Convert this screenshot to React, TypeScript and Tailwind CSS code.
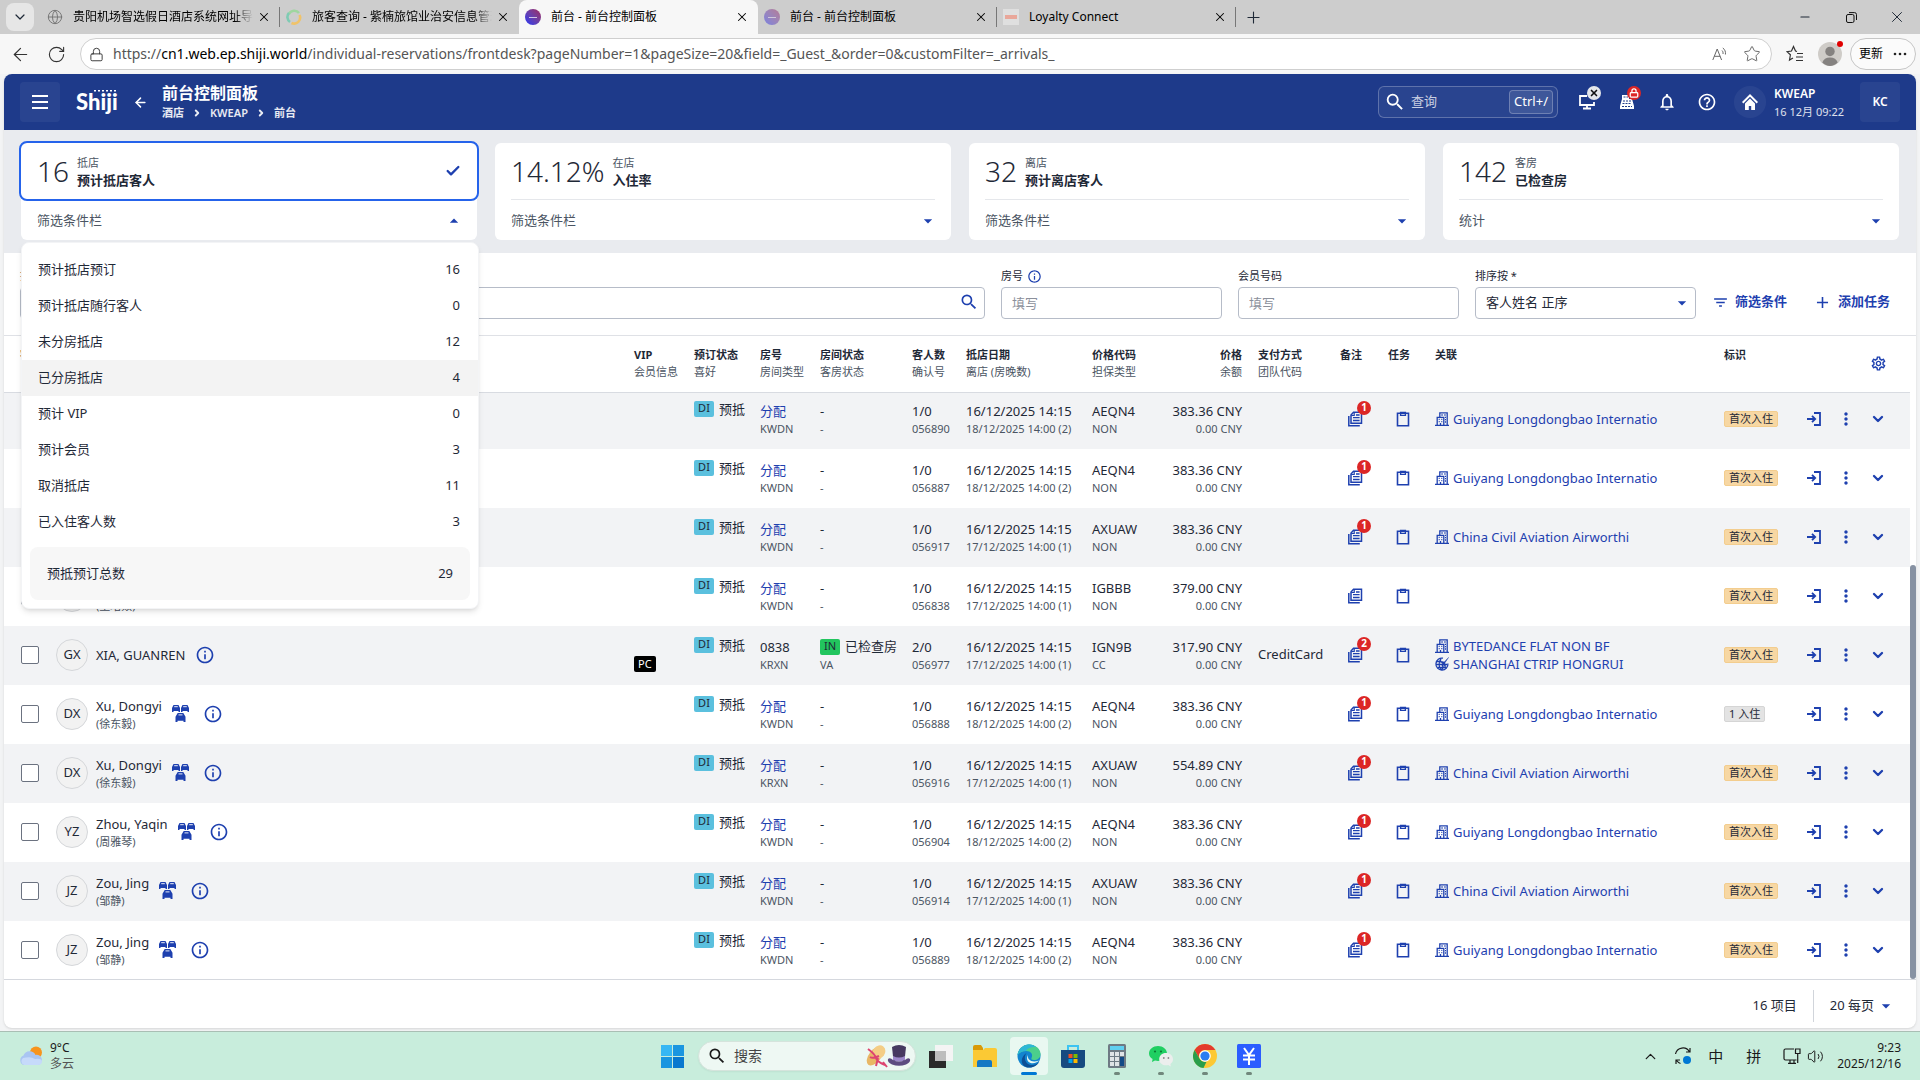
import React from 'react'
import {
  MdAdd,
  MdArrowDropDown,
  MdArrowDropUp,
  MdFilterList,
  MdHelpOutline,
  MdInfoOutline,
  MdMoreVert,
  MdNotificationsNone,
  MdOutlineSettings,
  MdSearch,
} from 'react-icons/md'
import { ArrowLeft, Check, ChevronDown, ChevronUp, Globe, Lock, Minus, Plus, RotateCw, Star, Volume2, X } from 'lucide-react'

type Guest = {
  initials: string
  name?: string
  local?: string
  cars?: boolean
  info?: boolean
  member?: string
  room?: string
  type: string
  state?: string
  pax: string
  conf: string
  out: string
  rate: string
  guarantee: string
  price: string
  pay?: string
  notes?: number
  links: string[]
  flag: string
}

const guests: Guest[] = [
  { initials: '', type: 'KWDN', pax: '1/0', conf: '056890', out: '18/12/2025 14:00 (2)', rate: 'AEQN4', guarantee: 'NON', price: '383.36', notes: 1, links: ['Guiyang Longdongbao Internatio'], flag: '首次入住' },
  { initials: '', type: 'KWDN', pax: '1/0', conf: '056887', out: '18/12/2025 14:00 (2)', rate: 'AEQN4', guarantee: 'NON', price: '383.36', notes: 1, links: ['Guiyang Longdongbao Internatio'], flag: '首次入住' },
  { initials: '', type: 'KWDN', pax: '1/0', conf: '056917', out: '17/12/2025 14:00 (1)', rate: 'AXUAW', guarantee: 'NON', price: '383.36', notes: 1, links: ['China Civil Aviation Airworthi'], flag: '首次入住' },
  { initials: '', name: ' ', local: '王培焱', type: 'KWDN', pax: '1/0', conf: '056838', out: '17/12/2025 14:00 (1)', rate: 'IGBBB', guarantee: 'NON', price: '379.00', links: [], flag: '首次入住' },
  { initials: 'GX', name: 'XIA, GUANREN', info: true, member: 'PC', room: '0838', type: 'KRXN', state: 'VA', pax: '2/0', conf: '056977', out: '17/12/2025 14:00 (1)', rate: 'IGN9B', guarantee: 'CC', price: '317.90', pay: 'CreditCard', notes: 2, links: ['BYTEDANCE FLAT NON BF', 'SHANGHAI CTRIP HONGRUI'], flag: '首次入住' },
  { initials: 'DX', name: 'Xu, Dongyi', local: '徐东毅', cars: true, info: true, type: 'KWDN', pax: '1/0', conf: '056888', out: '18/12/2025 14:00 (2)', rate: 'AEQN4', guarantee: 'NON', price: '383.36', notes: 1, links: ['Guiyang Longdongbao Internatio'], flag: '1 入住' },
  { initials: 'DX', name: 'Xu, Dongyi', local: '徐东毅', cars: true, info: true, type: 'KRXN', pax: '1/0', conf: '056916', out: '17/12/2025 14:00 (1)', rate: 'AXUAW', guarantee: 'NON', price: '554.89', notes: 1, links: ['China Civil Aviation Airworthi'], flag: '首次入住' },
  { initials: 'YZ', name: 'Zhou, Yaqin', local: '周雅琴', cars: true, info: true, type: 'KWDN', pax: '1/0', conf: '056904', out: '18/12/2025 14:00 (2)', rate: 'AEQN4', guarantee: 'NON', price: '383.36', notes: 1, links: ['Guiyang Longdongbao Internatio'], flag: '首次入住' },
  { initials: 'JZ', name: 'Zou, Jing', local: '邹静', cars: true, info: true, type: 'KWDN', pax: '1/0', conf: '056914', out: '17/12/2025 14:00 (1)', rate: 'AXUAW', guarantee: 'NON', price: '383.36', notes: 1, links: ['China Civil Aviation Airworthi'], flag: '首次入住' },
  { initials: 'JZ', name: 'Zou, Jing', local: '邹静', cars: true, info: true, type: 'KWDN', pax: '1/0', conf: '056889', out: '18/12/2025 14:00 (2)', rate: 'AEQN4', guarantee: 'NON', price: '383.36', notes: 1, links: ['Guiyang Longdongbao Internatio'], flag: '首次入住' },
]

const menu = [
  ['预计抵店预订', '16'],
  ['预计抵店随行客人', '0'],
  ['未分房抵店', '12'],
  ['已分房抵店', '4'],
  ['预计 VIP', '0'],
  ['预计会员', '3'],
  ['取消抵店', '11'],
  ['已入住客人数', '3'],
]

const cards = [
  { value: '16', small: '抵店', title: '预计抵店客人', more: '筛选条件栏' },
  { value: '14.12%', small: '在店', title: '入住率', more: '筛选条件栏' },
  { value: '32', small: '离店', title: '预计离店客人', more: '筛选条件栏' },
  { value: '142', small: '客房', title: '已检查房', more: '统计' },
]

const columns = [
  { a: 'VIP', b: '会员信息' },
  { a: '预订状态', b: '喜好' },
  { a: '房号', b: '房间类型' },
  { a: '房间状态', b: '客房状态' },
  { a: '客人数', b: '确认号' },
  { a: '抵店日期', b: '离店 (房晚数)' },
  { a: '价格代码', b: '担保类型' },
  { a: '价格', b: '余额', right: true },
  { a: '支付方式', b: '团队代码' },
  { a: '备注' },
  { a: '任务' },
  { a: '关联' },
  { a: '标识' },
]

/* ---------- icons ---------- */

function NoteIcon() {
  return (
    <svg viewBox="0 0 16 16" className="h-4 w-4" fill="none" stroke="currentColor" strokeWidth="1.5">
      <path d="M1.800 5v9.700h11" />
      <path d="M6.500 1.300h8v11H4V4z" />
      <path d="M7.200 1.500v3H4.200" strokeWidth="1.200" />
      <path d="M6 6.700h6.600M6 9.500h6.600M9 4h3.600" strokeWidth="1.300" />
    </svg>
  )
}

function ClipboardIcon() {
  return (
    <svg viewBox="0 0 14 16" className="h-4 w-[14px]" fill="none" stroke="currentColor" strokeWidth="1.6">
      <path d="M1.500 2.300h11v12.400h-11z" />
      <path d="M4.600 1.400h4.800v3H4.600z" strokeWidth="1.400" />
    </svg>
  )
}

function BuildingIcon() {
  return (
    <svg viewBox="0 0 14 14" className="h-[14px] w-[14px] shrink-0" fill="none" stroke="currentColor" strokeWidth="1.3">
      <path d="M0 13.300h14M2.200 13.400V5.300h6.600v8M4.800 5V.8h7.400v12.600" />
      <path d="M6.400 3h1.300M9.300 3h1.300M10 5.300h1M10 7.600h1M10 10h1M3.700 7.400h1M6.300 7.400h1M3.700 9.600h1M6.300 9.600h1M5.500 11v2" />
    </svg>
  )
}

function AgentIcon() {
  return (
    <svg viewBox="0 0 14 14" className="h-[14px] w-[14px] shrink-0" fill="none" stroke="currentColor" strokeWidth="1.3">
      <path d="M8 1.200A6 6 0 1 0 12.900 6.500" />
      <path d="M1 7.500h11M6 2c-2.400 3-2.400 7.600 0 11M7.500 8c1 2 0 4-1 5M2 4.500h4M2.500 10.500h9" />
      <path d="M13.600.4 9.200 5 5.800 4l-.8.8 2.600 1.600-1.400 1.400 1 .8 1.300-1 1.500 2.500.8-.8-1-3.200z" fill="currentColor" strokeWidth=".4" />
    </svg>
  )
}

function EnterIcon() {
  return (
    <svg viewBox="0 0 14 14" className="h-[14px] w-[14px]" fill="none" stroke="currentColor" strokeWidth="1.8">
      <path d="M7 1h6v12H7M0 7h8" />
      <path d="M5 3.800 8.200 7 5 10.200" />
    </svg>
  )
}

function CarsIcon() {
  const car = 'M1.500 0h5L8 3v4H6.500V6h-5v1H0V3z'
  return (
    <svg viewBox="0 0 17 17" className="h-[17px] w-[17px]" fill="currentColor">
      <path d={car} />
      <path d={car} transform="translate(9 0)" />
      <path d="M5.700 8h5.600l2.200 3.800V17h-2v-1.300h-6V17h-2v-5.200z" />
      <path d="M2.200 1.700h3.600M11.200 1.700h3.600M6.500 9.900h4" stroke="#fff" strokeWidth=".9" />
    </svg>
  )
}

function Favicon({ kind }: { kind: string }) {
  if (kind === 'globe') return <Globe size={16} strokeWidth={1.500} className="text-[#777]" />
  if (kind === 'swirl') {
    return (
      <svg viewBox="0 0 16 16" className="h-4 w-4" fill="none" strokeWidth="2.600">
        <path d="M13 4a6 6 0 0 0-10 1" stroke="#9fd6a0" />
        <path d="M3 4a6 6 0 0 0 1 9" stroke="#7fcbb4" />
        <path d="M13.500 6a6 6 0 0 1-8 8" stroke="#f0c36a" />
      </svg>
    )
  }
  if (kind === 'loyalty') {
    return <span className="flex h-4 w-4 items-center justify-center bg-[#dfdfdf]"><span className="h-1 w-3 bg-[#e9a79a]" /></span>
  }
  return (
    <span className={`flex h-4 w-4 items-center justify-center rounded-full bg-linear-to-tr from-[#1f2df5] to-[#a01d5e] ${kind === 'dim' ? 'opacity-50' : ''}`}>
      <span className="h-px w-2 bg-white/70" />
    </span>
  )
}

/* ---------- browser ---------- */

function Tab({ title, kind, active, line, fade }: { title: string; kind: string; active?: boolean; line?: boolean; fade?: boolean }) {
  return (
    <div className={`flex h-full w-[239px] items-center pl-1.5 ${active ? 'rounded-t-lg bg-[#f7f7f7]' : ''}`}>
      <Favicon kind={kind} />
      <div className={`ml-2.5 w-[180px] overflow-hidden whitespace-nowrap text-black ${fade ? 'mask-r-from-90%' : ''}`}>{title}</div>
      <button aria-label="关闭标签页" className="ml-1 text-black"><X size={14} strokeWidth={1.800} /></button>
      <span className={`ml-auto h-5 w-px ${line ? 'bg-[#777]' : ''}`} />
    </div>
  )
}

function Browser() {
  return (
    <div className="text-xs">
      <div className="flex h-[34px] items-center bg-[#cdcdcd]">
        <button aria-label="标签页搜索" className="ml-1.5 mr-[7px] flex h-7 w-7 items-center justify-center rounded-lg bg-[#e6e6e6]">
          <ChevronDown size={16} strokeWidth={1.800} />
        </button>
        <Tab kind="globe" title="贵阳机场智选假日酒店系统网址导航" line fade />
        <Tab kind="swirl" title="旅客查询 - 紫楠旅馆业治安信息管理系" fade />
        <Tab kind="shiji" title="前台 - 前台控制面板" active />
        <Tab kind="dim" title="前台 - 前台控制面板" line />
        <Tab kind="loyalty" title="Loyalty Connect" line />
        <button aria-label="新建标签页" className="ml-2"><Plus size={19} strokeWidth={1.400} /></button>
        <div className="ml-auto flex items-center">
          <button aria-label="最小化" className="flex w-[46px] justify-center"><Minus size={14} strokeWidth={1.800} /></button>
          <button aria-label="还原" className="flex w-[46px] justify-center">
            <svg viewBox="0 0 11 11" className="h-[11px] w-[11px]" fill="none" stroke="#111">
              <rect x=".5" y="2.500" width="7.500" height="8" rx="1.500" />
              <path d="M3 .6h5.500a2 2 0 0 1 2 2v5.400" />
            </svg>
          </button>
          <button aria-label="关闭" className="flex w-[46px] justify-center"><X size={18} strokeWidth={1.300} /></button>
        </div>
      </div>
      <div className="flex h-10 items-center bg-[#f7f7f7] pl-2.5 pr-1">
        <button aria-label="后退" className="text-[#333]"><ArrowLeft size={21} strokeWidth={1.400} /></button>
        <button aria-label="刷新" className="ml-4 text-[#333]"><RotateCw size={19} strokeWidth={1.400} /></button>
        <div className="ml-3.5 flex h-8 flex-1 items-center rounded-full border border-[#cfcfcf] bg-white pl-2 pr-2.5">
          <Lock size={15} strokeWidth={1.500} className="text-[#333]" />
          <div className="ml-[9px] flex-1 text-sm text-[#555]">
            https://<span className="text-black">cn1.web.ep.shiji.world</span>/individual-reservations/frontdesk?pageNumber=1&amp;pageSize=20&amp;field=_Guest_&amp;order=0&amp;customFilter=_arrivals_
          </div>
          <svg viewBox="0 0 16 16" className="h-4 w-4" fill="none" stroke="#666">
            <path d="m.8 14 4.400-11 4.400 11M2.300 10.300h5.800M10 4.500c1 1 1.200 2.200 1 3.500M10.800 2c2.200 1.600 3 3.800 2.600 6.500" />
          </svg>
          <Star size={18} strokeWidth={1.300} className="ml-[15px] text-[#666]" />
        </div>
        <svg viewBox="0 0 18 18" className="ml-3.5 h-[18px] w-[18px]" fill="none" stroke="#333" strokeWidth="1.200">
          <path d="M11 6.500 9.500 6 7.500 1.500 5.500 6 1 6.600l3.400 3.200-.9 5.200 3.500-2M11 8.500h6M10 12h7M10 15.500h7" />
        </svg>
        <button aria-label="个人资料" className="relative ml-3.5 h-6 w-6 rounded-full bg-[#cfccc8]">
          <svg viewBox="0 0 28 28" className="h-6 w-6" fill="#858280"><circle cx="14" cy="11" r="5.500" /><path d="M5 24q2-6 9-6t9 6q-4 4-9 4t-9-4" /></svg>
          <span className="absolute -top-px -right-px h-1.5 w-1.5 rounded-full bg-[#e00000]" />
        </button>
        <button className="ml-2 flex h-8 items-center gap-2.5 rounded-full border border-[#c6c6c6] bg-[#fbfbfb] px-2 text-black">
          更新
          <svg viewBox="0 0 14 4" className="h-1 w-3.5" fill="#222"><circle cx="2" cy="2" r="1.300" /><circle cx="7" cy="2" r="1.300" /><circle cx="12" cy="2" r="1.300" /></svg>
        </button>
      </div>
    </div>
  )
}

/* ---------- app header ---------- */

function Header() {
  return (
    <header className="flex h-14 shrink-0 items-center bg-[#1e3a8a] px-4 text-white">
      <button aria-label="菜单" className="flex h-10 w-10 items-center justify-center rounded bg-white/5">
        <svg viewBox="0 0 16 14" className="h-3.5 w-4" stroke="#fff" strokeWidth="2"><path d="M0 1h16M0 7h16M0 13h16" /></svg>
      </button>
      <a href="#" className="relative ml-4 w-11 font-[Lato] text-[22px] leading-6 font-black">
        Shiji
        <svg viewBox="0 0 24 2" className="absolute right-0.5 top-0 h-0.5 w-6" fill="#fff"><path d="M0 0h2v1.500H0zM4 0h2v1.500H4zM8 0h2v1.500H8zM12 0h2v1.500h-2zM16 0h2v1.500h-2zM20 0h2v1.500h-2z" /></svg>
      </a>
      <button aria-label="返回" className="ml-[13px]"><ArrowLeft size={15} strokeWidth={2.400} /></button>
      <div className="ml-3.5 pt-0.5">
        <h1 className="text-base leading-5 font-bold">前台控制面板</h1>
        <nav className="flex items-center gap-2 text-[11px] leading-5 font-semibold text-white/90">
          <a href="#">酒店</a>
          <ChevronDown size={10} strokeWidth={4.500} className="-rotate-90" />
          <a href="#">KWEAP</a>
          <ChevronDown size={10} strokeWidth={4.500} className="-rotate-90" />
          <a href="#">前台</a>
        </nav>
      </div>
      <label className="ml-auto flex h-8 w-[180px] items-center rounded-md border border-white/25 bg-white/5 pl-[5px] pr-1 text-[13px]">
        <MdSearch size={22} />
        <input aria-label="查询" placeholder="查询" className="ml-[5px] w-0 flex-1 placeholder:text-white/75" />
        <kbd className="flex h-6 items-center rounded border border-white/25 bg-white/10 px-1 font-[inherit]">Ctrl+/</kbd>
      </label>
      <div className="ml-[19px] flex items-center gap-5">
        <button aria-label="设备" className="relative">
          <svg viewBox="0 0 20 20" className="h-5 w-5" fill="none" stroke="#fff" strokeWidth="1.8"><path d="M10 4H3v9h14v-3M6 16.500h8M10 13v3" /></svg>
          <span className="absolute -top-1.5 left-2.5 flex h-3.5 w-3.5 items-center justify-center rounded-full bg-[#e5e7eb] text-[#111]"><X size={10} strokeWidth={4} /></span>
        </button>
        <button aria-label="收银" className="relative">
          <svg viewBox="0 0 20 20" className="h-5 w-5" fill="#fff">
            <path d="M5 3h7v4h3l2 7v3H3v-3l2-7z" />
            <path d="M6.500 5H11M6 9h8M5.500 11.500h9M5 14.500h10" stroke="#1e3a8a" strokeDasharray="2 1" />
          </svg>
          <span className="absolute -top-1.5 left-2.5 flex h-3.5 w-3.5 items-center justify-center rounded-full bg-[#dc2626]"><Lock size={10} strokeWidth={3} /></span>
        </button>
        <button aria-label="通知"><MdNotificationsNone size={20} /></button>
        <button aria-label="帮助"><MdHelpOutline size={20} /></button>
      </div>
      <span className="ml-[17px] flex h-8 w-8 items-center justify-center rounded-full bg-white/5">
        <svg viewBox="0 0 18 18" className="h-[18px] w-[18px]" fill="#fff"><path d="M9 1 1 9l1.400 1.400L9 3.800l6.600 6.600L17 9z" /><path d="M9 5.500 4 10.500V17h3.800v-4h2.400v4H14v-6.500z" /></svg>
      </span>
      <div className="ml-2 w-[70px] pt-0.5 whitespace-nowrap">
        <div className="text-xs leading-[18px] font-semibold">KWEAP</div>
        <div className="text-[11px] leading-[18px] text-white/85">16 12月 09:22</div>
      </div>
      <button className="ml-4 h-10 w-10 rounded bg-white/5 text-xs font-semibold">KC</button>
    </header>
  )
}

function Cards() {
  return (
    <section className="grid shrink-0 grid-cols-4 gap-[18px] bg-[#e9ebef] px-[17px] py-[13px]">
      {cards.map((c, i) => {
        const on = i === 0
        return (
          <div key={c.title} className="relative rounded-md bg-white">
            <div className={`flex items-center ${on ? '-mx-0.5 -mt-0.5 h-[60px] rounded-lg border-2 border-[#2563eb] px-4' : 'mx-4 h-[57px] border-b border-[#e5e7eb]'}`}>
              <span className="text-[28px] leading-8 font-light">{c.value}</span>
              <div className="ml-2 mt-0.5">
                <div className="text-[11px] leading-4 text-[#4b5563]">{c.small}</div>
                <div className="text-[13px] leading-[18px] font-bold">{c.title}</div>
              </div>
              {on && <Check size={16} strokeWidth={3.500} className="ml-auto text-[#1e40af]" />}
            </div>
            <button className={`flex w-full items-center justify-between pr-[13px] pl-4 text-[13px] text-[#4b5563] ${on ? 'h-[39px] pt-px' : 'h-10 pt-0.5'}`}>
              {c.more}
              {on ? <MdArrowDropUp size={20} className="text-[#1e40af]" /> : <MdArrowDropDown size={20} className="text-[#1e40af]" />}
            </button>
            {on && <Menu />}
          </div>
        )
      })}
    </section>
  )
}

function Menu() {
  return (
    <div className="absolute left-0 -right-0.5 top-full z-30 mt-0.5 rounded-lg border border-[#f3f4f6] bg-white pt-[9px] pb-2 text-[13px] text-[#1f2937] shadow-md">
      {menu.map(([label, n]) => (
        <button key={label} className={`flex h-9 w-full items-center justify-between pr-[18px] pl-4 ${n === '4' ? 'bg-[#f3f3f3]' : ''}`}>
          <span>{label}</span>
          <span>{n}</span>
        </button>
      ))}
      <div className="mx-2 mt-[7px] flex h-[53px] items-center justify-between rounded-lg bg-[#f7f7f7] px-[17px]">
        <span>预抵预订总数</span>
        <span>29</span>
      </div>
    </div>
  )
}

function Filters() {
  const box = 'h-8 w-full rounded border border-[#b6bcc8] bg-white px-2.5 text-[13px] placeholder:text-[#8b909b]'
  return (
    <section className="flex shrink-0 items-end gap-4 border-b border-[#dfe1e6] px-4 pt-[13px] pb-4 text-[13px]">
      <div className="relative flex-1">
        <label htmlFor="q" className="flex h-5 items-center text-[11px]">搜</label>
        <input id="q" className={`${box} mt-px`} />
        <MdSearch size={20} className="absolute right-1.5 bottom-[7px] text-[#1e40af]" />
      </div>
      <div className="w-[221px]">
        <label htmlFor="room" className="flex h-5 items-center gap-1 text-[11px]">房号 <MdInfoOutline size={15} className="text-[#1e40af]" /></label>
        <input id="room" placeholder="填写" className={`${box} mt-px`} />
      </div>
      <div className="w-[221px]">
        <label htmlFor="member" className="flex h-5 items-center text-[11px]">会员号码</label>
        <input id="member" placeholder="填写" className={`${box} mt-px`} />
      </div>
      <div className="relative w-[221px]">
        <label htmlFor="sort" className="flex h-5 items-center text-[11px]">排序按 *</label>
        <select id="sort" className={`${box} mt-px appearance-none`}>
          <option>客人姓名 正序</option>
        </select>
        <MdArrowDropDown size={20} className="pointer-events-none absolute right-1 bottom-1.5 text-[#1e40af]" />
      </div>
      <div className="flex h-[34px] w-[188px] items-center gap-[26px] font-bold whitespace-nowrap text-[#1e40af]">
        <button className="flex items-center gap-1.5"><MdFilterList size={17} />筛选条件</button>
        <button className="flex items-center gap-1.5"><MdAdd size={19} />添加任务</button>
      </div>
    </section>
  )
}

/* ---------- guest table ---------- */

function Row({ g, odd }: { g: Guest; odd: boolean }) {
  const sub = 'text-[11px] leading-4 text-[#4b5563]'
  return (
    <tr className={`h-[59px] [&>td]:pb-0.5 ${odd ? 'bg-[#f2f3f5]' : 'bg-white'}`}>
      <td>
        <div className="flex items-center pl-[17px]">
          <input type="checkbox" aria-label={`选择 ${g.name ?? ''}`} className="h-[18px] w-[18px] appearance-none rounded-xs border border-[#6b7280] bg-white" />
          <span className="ml-[17px] flex h-8 w-8 items-center justify-center rounded-full border border-[#d5d7da] bg-[#f2f2f2] text-[13px]">{g.initials}</span>
          <div className="ml-2">
            <div className="leading-5 whitespace-pre">{g.name}</div>
            {g.local && <div className={sub}>({g.local})</div>}
          </div>
          <div className="ml-2.5 flex items-center gap-3.5 text-[#1e40af]">
            {g.cars && <CarsIcon />}
            {g.info && <button aria-label="详情"><MdInfoOutline size={20} /></button>}
          </div>
        </div>
      </td>
      <td>{g.member && <span className="mt-5 inline-flex h-4 items-center rounded-xs bg-black px-1 text-[11px] text-white">{g.member}</span>}</td>
      <td>
        <div className="flex h-9 items-start gap-[5px]">
          <span className="flex h-4 w-5 items-center justify-center rounded-xs bg-[#5bc0de] text-[11px]">DI</span>
          <span className="leading-4">预抵</span>
        </div>
      </td>
      <td>
        <div className="leading-5">{g.room ?? <a href="#" className="text-[#1e40af]">分配</a>}</div>
        <div className={sub}>{g.type}</div>
      </td>
      <td>
        {g.state ? (
          <div className="flex h-5 items-center gap-[5px]">
            <span className="flex h-4 w-5 items-center justify-center rounded-xs bg-[#22c55e] text-[11px]">IN</span>已检查房
          </div>
        ) : <div className="leading-5">-</div>}
        <div className={sub}>{g.state ?? '-'}</div>
      </td>
      <td>
        <div className="leading-5">{g.pax}</div>
        <div className={sub}>{g.conf}</div>
      </td>
      <td>
        <div className="pt-px leading-5">16/12/2025 14:15</div>
        <div className={sub}>{g.out}</div>
      </td>
      <td>
        <div className="leading-5">{g.rate}</div>
        <div className={sub}>{g.guarantee}</div>
      </td>
      <td className="pr-4 text-right">
        <div className="leading-5">{g.price} CNY</div>
        <div className={sub}>0.00 CNY</div>
      </td>
      <td>{g.pay}</td>
      <td className="text-[#1e40af]">
        <button aria-label="备注" className="relative ml-[7px] flex">
          <NoteIcon />
          {g.notes && <span className="absolute -top-2.5 left-2.5 flex h-3.5 w-3.5 items-center justify-center rounded-full bg-[#dc2626] text-[10px] font-bold text-white">{g.notes}</span>}
        </button>
      </td>
      <td className="text-[#1e40af]"><button aria-label="任务" className="ml-2 flex"><ClipboardIcon /></button></td>
      <td>
        {g.links.map((l, i) => (
          <a key={l} href="#" className="flex items-center gap-1 leading-[18px] text-[#1e40af]">
            {i === 0 ? <BuildingIcon /> : <AgentIcon />}{l}
          </a>
        ))}
      </td>
      <td>
        <span className={`inline-flex h-4 items-center rounded-xs border px-1 align-middle text-[11px] ${g.flag === '1 入住' ? 'border-[#d5d5d5] bg-[#e3e3e3]' : 'border-[#f3cd8e] bg-[#f7d7a3]'}`}>{g.flag}</span>
      </td>
      <td>
        <div className="flex items-center text-[#1e40af]">
          <button aria-label="入住" className="ml-[9px]"><EnterIcon /></button>
          <button aria-label="更多" className="ml-[15px]"><MdMoreVert size={20} /></button>
          <button aria-label="展开" className="ml-3.5"><ChevronDown size={16} strokeWidth={3.500} /></button>
        </div>
      </td>
    </tr>
  )
}

function GuestTable() {
  return (
    <div className="relative min-h-0 flex-1 overflow-hidden pr-1.5">
      <table className="w-full table-fixed border-collapse text-left text-[13px]">
        <colgroup>
          <col />
          <col className="w-[60px]" />
          <col className="w-[66px]" />
          <col className="w-[60px]" />
          <col className="w-[92px]" />
          <col className="w-[54px]" />
          <col className="w-[126px]" />
          <col className="w-[70px]" />
          <col className="w-[96px]" />
          <col className="w-[82px]" />
          <col className="w-[48px]" />
          <col className="w-[47px]" />
          <col className="w-[289px]" />
          <col className="w-[74px]" />
          <col className="w-[112px]" />
        </colgroup>
        <thead className="relative z-10 bg-white shadow-[0_2px_0_#fff,0_3px_0_#d8dbe1]">
          <tr className="h-[54px] align-top text-[11px] leading-[17px]">
            <th className="pl-4 pt-2.5">客人</th>
            {columns.map((c) => (
              <th key={c.a} className={`pt-2.5 whitespace-nowrap ${c.right ? 'pr-4 text-right' : ''}`}>
                <div className="font-bold">{c.a}</div>
                {c.b && <div className="font-normal text-[#4b5563]">{c.b}</div>}
              </th>
            ))}
            <th className="pt-[19px] pl-[72px] text-[#1e40af]"><button aria-label="设置" className="flex"><MdOutlineSettings size={17} /></button></th>
          </tr>
        </thead>
        <tbody>
          {guests.map((g, i) => <Row key={g.conf} g={g} odd={i % 2 === 0} />)}
        </tbody>
      </table>
      <div className="absolute right-0 bottom-0 h-[414px] w-1.5 rounded-full bg-[#8792a3]" />
    </div>
  )
}

/* ---------- taskbar ---------- */

function TaskIcon({ name }: { name: string }) {
  switch (name) {
    case 'view':
      return <><path d="M0 7h17v17H0z" fill="#2a2a2a" /><path d="M6 1h18v16H6z" fill="#f4f4f4" /><path d="M6 7h11v10H6z" fill="#bdbdbd" /></>
    case 'folder':
      return <><path d="M0 3q0-2 2-2h6l2 3v4H0z" fill="#d99a06" /><path d="M0 6h10l2-2h10q2 0 2 2v17H0z" fill="#fbc934" /><path d="M4 23v-5q0-2 2-2h11q2 0 2 2v5z" fill="#1579c4" /></>
    case 'edge':
      return <><circle cx="12" cy="12" r="11.500" fill="#1284cf" /><path d="M.5 11C2 4 7 .5 12 .5S23.500 4 23.500 10c0 4-3 6-6.500 6-2.500 0-3-1-2.500-2 2-4-1-7-5-7C5 7 2 9 .5 11" fill="#4bcf8c" /><path d="M.5 11C2 4 7 .5 12 .5c3 0 5 .8 7 2.500C12 3 10 5 9 7 5 7 2 9 .5 11" fill="#2db7d6" /><path d="M9.500 9C6 13 8 21 15 21c3 0 5-1 7-3-2 4-6 5.500-10 5.500C4 23.500 2 14 9.500 9" fill="#0c4f95" /><path d="M11 11c-1 5 4 8 11 5.500-4 4.500-12 3.500-12-2.500 0-1 .5-2 1-3" fill="#eaf7f1" /></>
    case 'store':
      return <><path d="M7 6V2h10v4" fill="none" stroke="#3cc4f2" strokeWidth="2" /><path d="M0 6h24v15q0 3-3 3H3q-3 0-3-3z" fill="#174a80" /><path d="M7.500 10h4v4h-4z" fill="#f25022" /><path d="M12.500 10h4v4h-4z" fill="#7fba00" /><path d="M7.500 15h4v4h-4z" fill="#00a4ef" /><path d="M12.500 15h4v4h-4z" fill="#ffb900" /></>
    case 'calc':
      return <><rect x="3" width="18" height="24" rx="1.500" fill="#6e7a84" /><path d="M5 2h14v4H5z" fill="#5fd0f0" /><path d="M5 8h4v4H5zM10 8h4v4h-4zM15 8h4v4h-4zM5 13h4v4H5zM10 13h4v4h-4zM5 18h4v4H5zM10 18h4v4h-4z" fill="#dfe3e6" /><path d="M15 13h4v9h-4z" fill="#134a86" /></>
    case 'wechat':
      return <><path d="M9 2c5 0 9 3.200 9 7.500S14 17 9 17c-1 0-2-.1-3-.4L3 18l.6-3C1.500 13.800 0 12 0 9.500 0 5.200 4 2 9 2" fill="#20cf62" /><circle cx="6" cy="7.500" r="1.100" fill="#0c7a34" /><circle cx="12" cy="7.500" r="1.100" fill="#0c7a34" /><path d="M17 9c4 0 7 2.700 7 6.200 0 2-1 3.600-2.600 4.800l.4 2.400-2.600-1.300c-5 1.200-9-1.900-9-5.900C10.200 11.700 13 9 17 9" fill="#eceeed" /><circle cx="14.800" cy="14" r=".9" fill="#8a8a8a" /><circle cx="19.400" cy="14" r=".9" fill="#8a8a8a" /></>
    case 'chrome':
      return <><circle cx="12" cy="12" r="12" fill="#fcc934" /><path d="M12 0a12 12 0 0 1 10.400 6H12a6 6 0 0 0-5.200 9L1.600 6A12 12 0 0 1 12 0" fill="#e33b2e" /><path d="M1.600 6 6.800 15A6 6 0 0 0 13.500 17.800L10.500 24A12 12 0 0 1 1.600 6" fill="#2a9e4b" /><circle cx="12" cy="12" r="5.800" fill="#fff" /><circle cx="12" cy="12" r="4.600" fill="#2b7cf0" /></>
    default:
      return <><rect width="24" height="24" rx="1.500" fill="#2b5dff" /><path d="M7 4l5 7 5-7M6 11.500h12M6 15.500h12M12 11v10" fill="none" stroke="#fff" strokeWidth="2" /></>
  }
}

function Taskbar() {
  const apps = ['view', 'folder', 'edge', 'store', 'calc', 'wechat', 'chrome', 'yen']
  return (
    <footer className="relative flex h-[49px] shrink-0 items-center border-t border-[#a9bfb4] bg-[#c8eddc] text-xs text-[#1a1a1a]">
      <div className="flex w-[661px] items-center pl-[19px]">
        <svg viewBox="0 0 24 20" className="h-5 w-6"><circle cx="17" cy="6.500" r="6" fill="#f7941e" /><path d="M5 19a5 5 0 0 1-.5-9.500A6.500 6.500 0 0 1 16.500 9 5 5 0 0 1 19 19z" fill="#a9c5f2" /><path d="M5 19a4 4 0 0 1-1-7q8-2 12 1 6-1 7 2 0 4-4 4z" fill="#c6dafa" /></svg>
        <div className="ml-[7px] leading-4">
          <div>9°C</div>
          <div className="text-[#555]">多云</div>
        </div>
      </div>
      <button aria-label="开始">
        <svg viewBox="0 0 23 23" className="h-[23px] w-[23px]" fill="#0c86d8"><path d="M0 0h11v11H0z" fill="#36b7f4" /><path d="M12 0h11v11H12zM0 12h11v11H0z" fill="#1a96e0" /><path d="M12 12h11v11H12z" fill="#0878cf" /></svg>
      </button>
      <label className="ml-3.5 flex h-[30px] w-[218px] items-center rounded-full border border-[#d5e4dc] bg-[#eef8f3] pl-2 pr-1 text-sm shadow-xs">
        <MdSearch size={20} />
        <input aria-label="搜索" placeholder="搜索" className="ml-[7px] w-0 flex-1 placeholder:text-[#444]" />
        <svg viewBox="0 0 46 24" className="h-6 w-[46px]">
          <ellipse cx="10" cy="12" rx="6" ry="11" transform="rotate(38 10 12)" fill="#e8b765" />
          <ellipse cx="14" cy="8" rx="6" ry="7" transform="rotate(38 14 8)" fill="#f4cd85" />
          <path d="M3 5q7 5 8 9t9 7M14 12q-6 3-9 1M13 14l-2 8M18 18l4 5" fill="none" stroke="#dd4470" strokeWidth="2" />
          <path d="M27 3q7-4 14 0l-1.500 14h-11z" fill="#463960" />
          <path d="M28 12q6 3 12 0v4q-6 3-12 0z" fill="#9b87c9" />
          <path d="M23 15q2-2 5 1 6 3 12 0 3-3 5-1 1 3-4 5.500-7 2.500-14 0-5-2.500-4-5.500" fill="#5d4b80" />
        </svg>
      </label>
      <div className="ml-[3px] flex">
        {apps.map((a) => (
          <button key={a} aria-label={a} className={`relative mx-[3px] flex h-[38px] w-[38px] items-center justify-center rounded ${a === 'edge' ? 'bg-white/60' : ''}`}>
            <svg viewBox="0 0 24 24" className="h-6 w-6"><TaskIcon name={a} /></svg>
            {a === 'edge' && <span className="absolute bottom-0 h-[3px] w-4 rounded-full bg-[#0078d4]" />}
            {['calc', 'wechat', 'chrome', 'yen'].includes(a) && <span className="absolute bottom-0 h-[3px] w-1.5 rounded-full bg-[#71877c]" />}
          </button>
        ))}
      </div>
      <div className="ml-auto flex items-center pr-[19px]">
        <ChevronUp size={17} strokeWidth={1.800} />
        <svg viewBox="0 0 18 18" className="ml-[15px] h-[18px] w-[18px]" fill="none" stroke="#1a1a1a" strokeWidth="1.200">
          <path d="M1.500 7a7.500 7.500 0 0 1 14-2M16 1v4h-4M2 17v-4h4M2.500 13.500q2 2.500 4 3" />
          <circle cx="13" cy="13" r="4" fill="#0078d4" stroke="none" />
        </svg>
        <span className="ml-4 text-[15px]">中</span>
        <span className="ml-[23px] text-[15px]">拼</span>
        <svg viewBox="0 0 18 16" className="ml-[22px] h-4 w-[18px]" fill="none" stroke="#1a1a1a" strokeWidth="1.200">
          <path d="M11 1H2.500Q1 1 1 2.500v8Q1 12 2.500 12h11M5 15.400h8M7 12v3M11 12v3M12.500 1H17v4.500h-4.500zM14.700 5.500V15" />
        </svg>
        <Volume2 size={17} strokeWidth={1.400} className="ml-1.5" />
        <div className="ml-[13px] text-right leading-4">
          <div>9:23</div>
          <div>2025/12/16</div>
        </div>
      </div>
    </footer>
  )
}

export default function App() {
  return (
    <div className="flex h-screen flex-col bg-[#f3f4f5] font-['Noto_Sans','Noto_Sans_CJK_SC',sans-serif] text-[#1f2937]">
      <Browser />
      <main className="mx-1 mb-[3px] flex min-h-0 flex-1 flex-col overflow-hidden rounded-lg bg-white shadow-sm">
        <Header />
        <Cards />
        <Filters />
        <GuestTable />
        <div className="flex h-[49px] shrink-0 items-center justify-end border-t border-[#d5d8de] pt-[3px] pr-5 text-[13px]">
          <span>16 项目</span>
          <span className="mx-4 h-8 w-px bg-[#d1d5db]" />
          <button className="flex items-center">20 每页 <MdArrowDropDown size={20} className="ml-0.5 text-[#1e40af]" /></button>
        </div>
      </main>
      <Taskbar />
    </div>
  )
}
